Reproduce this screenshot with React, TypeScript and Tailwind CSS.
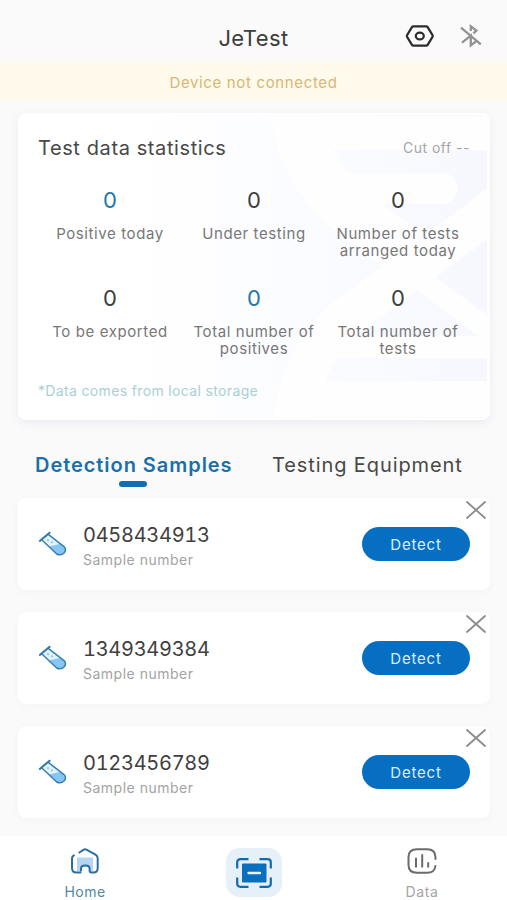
import { useState } from "react";

type Stat = {
  label: string;
  value: number;
  highlight?: boolean;
};

const STATS: Stat[] = [
  { label: "Positive today", value: 0, highlight: true },
  { label: "Under testing", value: 0 },
  { label: "Number of tests arranged today", value: 0 },
  { label: "To be exported", value: 0 },
  { label: "Total number of positives", value: 0, highlight: true },
  { label: "Total number of tests", value: 0 },
];

const SAMPLES = ["0458434913", "1349349384", "0123456789"];

function SettingsIcon() {
  return (
    <svg width="30" height="24" viewBox="0 0 30 24" fill="none" stroke="#2b2b2b" strokeWidth="2.2" strokeLinejoin="round">
      <path d="M8.2 2.3h13.2q.7 0 1.1.6l5 8.2q.5.9 0 1.8l-5 8.2q-.4.6-1.1.6H8.2q-.7 0-1.1-.6l-5-8.2q-.5-.9 0-1.8l5-8.2q.4-.6 1.1-.6z" />
      <ellipse cx="14.8" cy="12" rx="4" ry="3.4" />
    </svg>
  );
}

function BluetoothOffIcon() {
  return (
    <svg width="22" height="24" viewBox="0 0 22 24" fill="none" stroke="#929292" strokeWidth="2.3">
      <path d="M1 3.6L20.8 20.3" />
      <path d="M10.8 7V2.4L16.4 6.6L13.4 9.3" />
      <path d="M2 18.6L10.8 11.6V21.4L16 17.4" />
    </svg>
  );
}

function TubeIcon() {
  return (
    <svg width="30" height="26" viewBox="0 0 30 26" fill="none" strokeLinecap="round" strokeLinejoin="round">
      <path d="M4.2 9.2L10.6 3.6L26 15.6q2.8 2.9.3 6.1q-3.3 3.4-7.6 1.3z" fill="#e3f3fc" />
      <path d="M11 15.6L21.5 13L26 15.6q2.8 2.9.3 6.1q-3.3 3.4-7.6 1.3z" fill="#86c6f4" />
      <path d="M4.2 9.2L18.7 23q4.3 2.1 7.6-1.3q2.5-3.2-.3-6.1L10.6 3.6" stroke="#3a7fae" strokeWidth="1.5" />
      <path d="M1.8 9.9L11.6 1.7" stroke="#2d78a8" strokeWidth="2" />
      <circle cx="10" cy="9.2" r="1.1" fill="#8fcbd9" />
      <circle cx="14" cy="11.3" r="1.1" fill="#8fcbd9" />
    </svg>
  );
}

function CloseIcon() {
  return (
    <svg width="20" height="18" viewBox="0 0 20 18" fill="none" stroke="#8c8c8c" strokeWidth="1.8" strokeLinecap="round">
      <path d="M1 1l18 16M19 1L1 17" />
    </svg>
  );
}

function HomeIcon() {
  return (
    <svg className="shrink-0" width="28" height="26" viewBox="0 0 28 26" fill="none" stroke="#2a6f9e" strokeWidth="2" strokeLinecap="round" strokeLinejoin="round">
      <path d="M6 9.5h16v14h-3.6v-3q0-3-4.3-3t-4.3 3v3H6z" fill="#b5d5f3" stroke="none" />
      <path d="M8.4 4.5L12.8 1.7q1.3-.7 2.6 0L24.5 6.6Q26.7 7.9 26.7 10.5V20q0 4.600-4.300 4.600h-2q-1.800 0-1.800-2v-2q0-3-4.300-3t-4.300 3v2M9.500 24.600H5.500Q1 24.600 1 20V10.500q0-1.900 1.800-3.100" />
    </svg>
  );
}

function ScanIcon() {
  return (
    <svg width="36" height="30" viewBox="0 0 36 30" fill="none">
      <path
        d="M12.5 1.2H4.5Q1.2 1.2 1.2 4.2V10.5M23.5 1.2h8q3.3 0 3.3 3v6.3M34.8 19.5v6.3q0 3-3.3 3h-8M12.5 28.8h-8q-3.3 0-3.3-3v-6.3"
        stroke="#0f6cb0"
        strokeWidth="2.2"
      />
      <rect x="6" y="5.5" width="24.5" height="19" rx="1" fill="#0a70bd" />
      <path d="M12.5 15h11.5" stroke="#e6f1fa" strokeWidth="2.4" strokeLinecap="round" />
    </svg>
  );
}

function DataIcon() {
  return (
    <svg className="shrink-0" width="30" height="26" viewBox="0 0 30 26" fill="none" stroke="#6b6b6b" strokeWidth="2" strokeLinecap="round">
      <path d="M28.5 11V9.5Q28.5 1.2 20 1.2H10Q1.5 1.2 1.5 9V17Q1.5 24.8 10 24.8H20Q27.7 24.8 28.4 18" />
      <path d="M9 10.5v8.2M15.2 7v11.7M21.2 15v3.7" />
    </svg>
  );
}

// faint DNA helix on the right of the statistics card
function HelixBackdrop() {
  return (
    <svg className="absolute inset-0" width="472" height="307" viewBox="0 0 472 307" fill="none">
      <defs>
        <linearGradient id="tint" x1="0" x2="1">
          <stop offset="0" stopColor="#ffffff" />
          <stop offset="0.45" stopColor="#fbfcff" />
          <stop offset="1" stopColor="#f6f8fe" />
        </linearGradient>
      </defs>
      <rect x="110" y="2" width="359" height="303" rx="6" fill="url(#tint)" />
      <g stroke="#fefeff">
        <path d="M290 20H472" strokeWidth="34" />
        <path d="M310 75.5H424" strokeWidth="31" strokeLinecap="round" />
        <path d="M320 234H472" strokeWidth="22" />
        <path d="M280 286H466" strokeWidth="36" strokeLinecap="round" />
        <path d="M276 -10Q282 60 340 104T400 148" strokeWidth="50" />
        <path d="M410 172L480 224" strokeWidth="22" strokeLinecap="round" />
        <path d="M274 317Q282 240 336 198Q400 154 480 92" strokeWidth="40" />
      </g>
    </svg>
  );
}

function StatCell({ stat }: { stat: Stat }) {
  return (
    <div className="text-center">
      <div className={`text-[22px] leading-[30px] ${stat.highlight ? "text-[#2276ad]" : "text-[#3d3d3d]"}`}>
        {stat.value}
      </div>
      <div className="mt-[10px] -mb-px text-[15px] leading-[17px] tracking-[0.6px] text-[#777777]">{stat.label}</div>
    </div>
  );
}

function SampleCard({ id, onRemove }: { id: string; onRemove: () => void }) {
  return (
    <div className="relative flex h-[92px] items-center rounded-lg bg-white px-5 shadow-[0_2px_8px_rgba(60,70,110,0.03)]">
      <TubeIcon />
      <div className="ml-[15px] flex-1 pt-[5px]">
        <div className="text-xl leading-7 tracking-[-0.3px] tabular-nums text-[#404040]">{id}</div>
        <div className="-mt-px text-sm leading-6 tracking-[0.5px] text-[#a3a3a3]">Sample number</div>
      </div>
      <button className="h-[34px] w-[108px] rounded-full bg-[#066fc2] pt-0.5 text-[15px] tracking-[0.8px] text-[#d9effc]">
        Detect
      </button>
      <button className="absolute right-1 top-[3px]" aria-label="Remove" onClick={onRemove}>
        <CloseIcon />
      </button>
    </div>
  );
}

export default function App() {
  const [samples, setSamples] = useState(SAMPLES);

  return (
    <div className="flex h-[900px] w-[507px] flex-col overflow-hidden bg-[#fafafa] font-['Inter',sans-serif]">
      {/* Title bar */}
      <header className="grid h-[62px] grid-cols-[1fr_auto_1fr] items-end pb-[10px]">
        <div />
        <h1 className="text-[22px] leading-7 tracking-[0.4px] text-[#3d3d3d]">JeTest</h1>
        <div className="flex items-center justify-end gap-[25px] pb-1 pr-[25px]">
          <SettingsIcon />
          <BluetoothOffIcon />
        </div>
      </header>

      <div className="h-[38px] bg-[#fffaec] text-center text-[15px] leading-[42px] tracking-[0.65px] text-[#d8b771]">
        Device not connected
      </div>

      {/* Statistics */}
      <section className="relative ml-[18px] mr-[17px] mt-[13px] h-[307px] shrink-0 overflow-hidden rounded-lg bg-white shadow-[0_3px_8px_rgba(80,90,180,0.09)]">
        <HelixBackdrop />
        <div className="relative px-5 pt-[21px]">
          <div className="flex items-center justify-between">
            <h2 className="text-xl leading-7 tracking-[0.6px] text-[#484848]">Test data statistics</h2>
            <span className="text-sm tracking-[0.5px] text-[#a5a5a8]">Cut off --</span>
          </div>
          <div className="mt-[23px] grid grid-cols-3 gap-y-[25px]">
            {STATS.map((s) => (
              <StatCell key={s.label} stat={s} />
            ))}
          </div>
          <p className="mt-[25px] text-sm leading-5 tracking-[0.35px] text-[#a9d0d6]">*Data comes from local storage</p>
        </div>
      </section>

      {/* Tabs */}
      <div className="mt-[30px] flex h-[48px] shrink-0 items-start pl-[35px]">
        <button className="flex w-[197px] flex-col text-xl font-semibold leading-[30px] tracking-[0.95px] whitespace-nowrap text-[#1b70ab]">
          Detection Samples
          <span className="ml-[84px] mt-px h-[6px] w-7 rounded-full bg-[#126eb0]" />
        </button>
        <button className="ml-10 text-xl leading-[30px] tracking-[0.9px] whitespace-nowrap text-[#484848]">
          Testing Equipment
        </button>
      </div>

      <div className="flex flex-1 flex-col gap-[22px] pl-[18px] pr-[17px]">
        {samples.map((id) => (
          <SampleCard key={id} id={id} onRemove={() => setSamples(samples.filter((s) => s !== id))} />
        ))}
      </div>

      {/* Bottom navigation */}
      <nav className="flex h-16 shrink-0 justify-between bg-white px-[45px]">
        <a className="flex w-20 flex-col items-center pt-3 text-sm leading-4 text-[#4d8b9f]">
          <HomeIcon />
          <span className="mt-[10px] tracking-[0.5px]">Home</span>
        </a>
        <a className="mt-3 flex h-[49px] w-14 items-center justify-center rounded-[14px] bg-[#e6f0f9]">
          <ScanIcon />
        </a>
        <a className="flex w-20 flex-col items-center pt-3 text-sm leading-4 text-[#a5a5a5]">
          <DataIcon />
          <span className="mt-[10px] tracking-[0.6px]">Data</span>
        </a>
      </nav>
    </div>
  );
}
